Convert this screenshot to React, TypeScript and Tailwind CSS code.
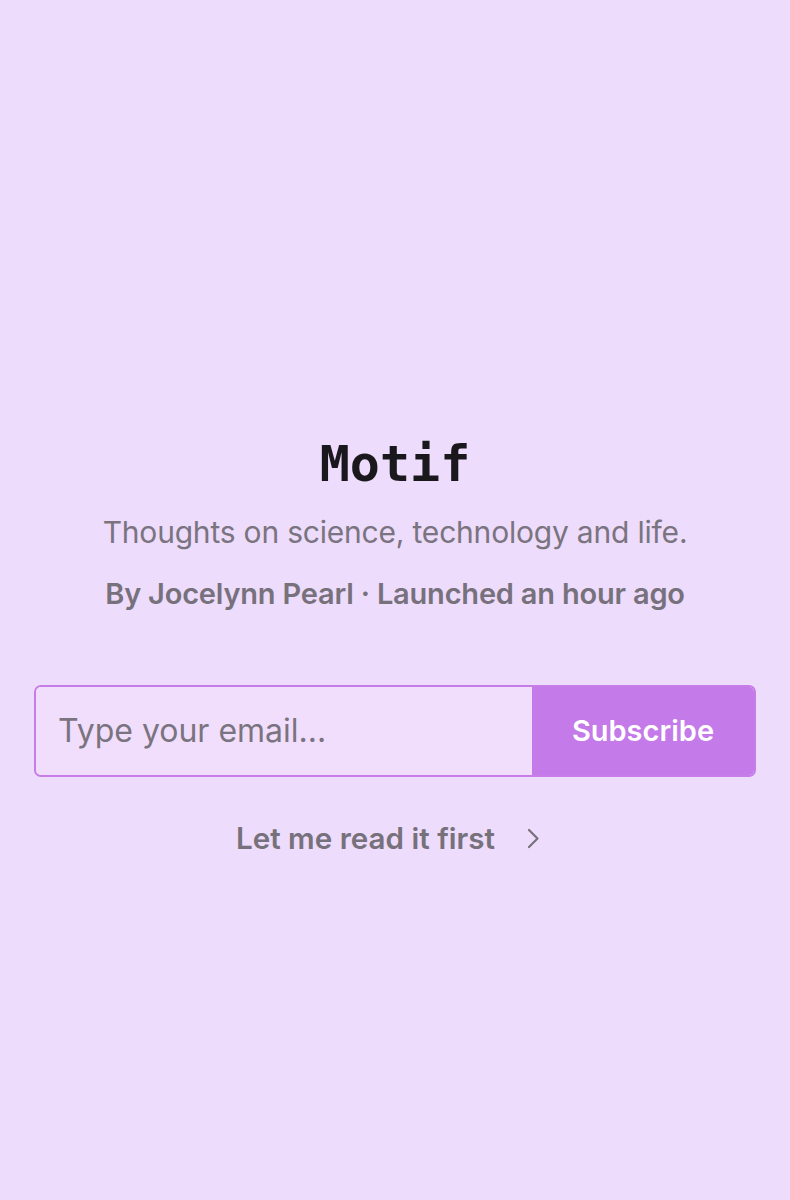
export default function App() {
  return (
    <div className="min-h-[1200px] w-full bg-[#eddcfb] flex flex-col items-center pt-[432px] font-['Inter','Liberation_Sans',sans-serif]">
      <h1 className="text-[50px] leading-[64px] font-bold text-[#1b181d] font-['DejaVu_Sans_Mono',monospace]">
        Motif
      </h1>
      <p className="mt-[16px] text-[30px] leading-[40px] text-[#7a7480] tracking-[-0.2px]">
        Thoughts on science, technology and life.
      </p>
      <p className="mt-[24px] text-[29px] leading-[36px] font-semibold text-[#77717c] tracking-[-0.2px]">
        By Jocelynn Pearl · Launched an hour ago
      </p>

      <form
        className="mt-[73px] w-[722px] h-[92px] flex rounded-[7px] border-2 border-[#c77de8] overflow-hidden"
        onSubmit={(e) => e.preventDefault()}
      >
        <input
          type="email"
          placeholder="Type your email..."
          className="flex-1 min-w-0 bg-[#f1defc] px-[22px] text-[32px] text-[#1b181d] placeholder:text-[#7a7480] outline-none"
        />
        <button
          type="submit"
          className="w-[222px] bg-[#c47ae9] text-white text-[29px] font-semibold"
        >
          Subscribe
        </button>
      </form>

      <button
        type="button"
        className="mt-[41px] h-[40px] flex items-center gap-[32px] text-[29.6px] font-semibold text-[#77717c] pr-[14px]"
      >
        Let me read it first
        <svg width="13" height="21" viewBox="0 0 13 21" fill="none" stroke="currentColor" strokeWidth="2.2" strokeLinecap="round" strokeLinejoin="round">
          <polyline points="2,2 10.5,10.5 2,19" />
        </svg>
      </button>
    </div>
  );
}
